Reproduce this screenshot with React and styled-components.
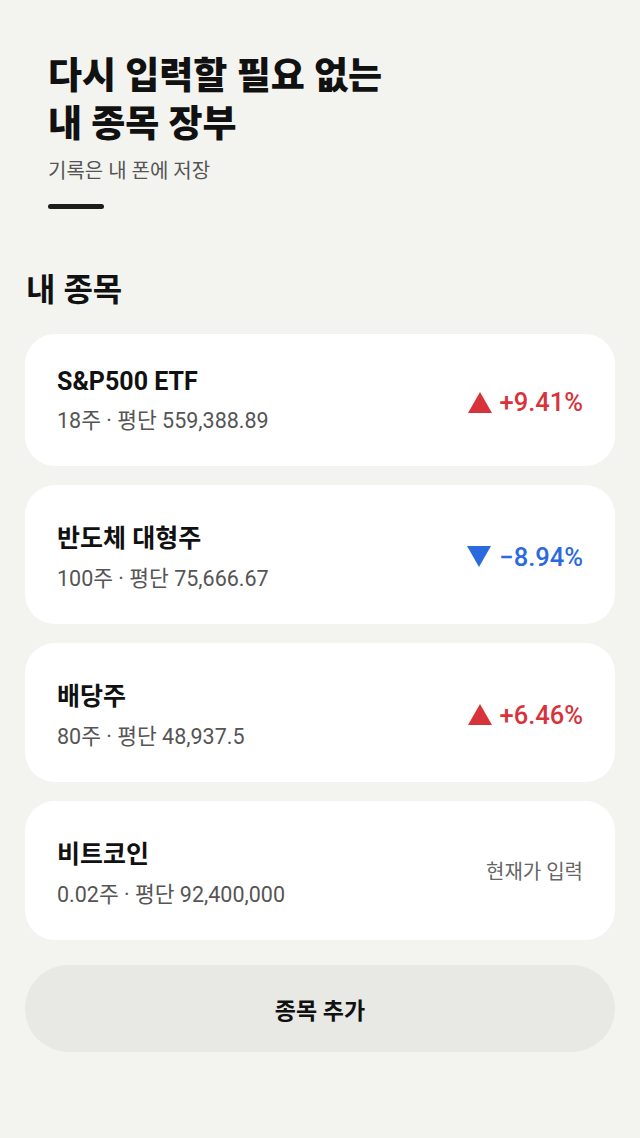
import React from 'react';
import styled, { createGlobalStyle } from 'styled-components';

const GlobalStyle = createGlobalStyle`
  html, body {
    margin: 0;
    padding: 0;
    background: #f3f4f0;
  }
  body {
    font-family: Roboto, "Noto Sans CJK KR", sans-serif;
    color: #111;
  }
`;

const Page = styled.div`
  min-height: 1138px;
  padding: 53px 25px 40px;
  box-sizing: border-box;
`;

const Header = styled.header`
  padding: 0 23px;
`;

const Title = styled.h1`
  margin: 0;
  font-size: 37px;
  line-height: 48px;
  font-weight: 800;
  color: #111;
`;

const Subtitle = styled.p`
  margin: 6px 0 0;
  font-size: 20px;
  color: #555;
`;

const Bar = styled.div`
  width: 56px;
  height: 5px;
  border-radius: 3px;
  background: #1c1c1c;
  margin-top: 20px;
`;

const SectionTitle = styled.h2`
  margin: 55px 0 0 1px;
  font-size: 32px;
  font-weight: 700;
  color: #111;
`;

const List = styled.div`
  display: flex;
  flex-direction: column;
  gap: 19px;
  margin-top: 24px;
`;

const Card = styled.div`
  display: flex;
  align-items: center;
  justify-content: space-between;
  background: #fff;
  border-radius: 30px;
  padding: 32.5px 32px;
`;

const Info = styled.div`
  display: flex;
  flex-direction: column;
  gap: 7px;
`;

const Name = styled.div`
  font-size: 25px;
  font-weight: 700;
  color: #111;
`;

const Meta = styled.div`
  font-size: 21.5px;
  color: #555;
`;

const Change = styled.div`
  display: flex;
  align-items: center;
  gap: 8px;
  margin-top: 4px;
  font-size: 25.5px;
  font-weight: 500;
  color: ${(props) => (props.up ? '#d7333b' : '#2b6ade')};
`;

const Pending = styled.div`
  font-size: 20px;
  color: #666;
`;

const AddButton = styled.button`
  margin-top: 25px;
  width: 100%;
  height: 87px;
  border: none;
  border-radius: 44px;
  background: #e8e9e5;
  font-family: Roboto, "Noto Sans CJK KR", sans-serif;
  font-size: 23px;
  font-weight: 700;
  color: #111;
`;

const Triangle = ({ up }) => (
  <svg width="24" height="21" viewBox="0 0 24 21">
    {up ? <polygon points="12,0 24,21 0,21" fill="currentColor" /> : <polygon points="0,0 24,0 12,21" fill="currentColor" />}
  </svg>
);

const stocks = [
  { name: 'S&P500 ETF', meta: '18주 · 평단 559,388.89', change: '+9.41%', up: true },
  { name: '반도체 대형주', meta: '100주 · 평단 75,666.67', change: '−8.94%', up: false },
  { name: '배당주', meta: '80주 · 평단 48,937.5', change: '+6.46%', up: true },
  { name: '비트코인', meta: '0.02주 · 평단 92,400,000' },
];

export default function App() {
  return (
    <>
      <GlobalStyle />
      <Page>
        <Header>
          <Title>
            다시 입력할 필요 없는
            <br />
            내 종목 장부
          </Title>
          <Subtitle>기록은 내 폰에 저장</Subtitle>
          <Bar />
        </Header>
        <SectionTitle>내 종목</SectionTitle>
        <List>
          {stocks.map((s) => (
            <Card key={s.name}>
              <Info>
                <Name>{s.name}</Name>
                <Meta>{s.meta}</Meta>
              </Info>
              {s.change ? (
                <Change up={s.up}>
                  <Triangle up={s.up} />
                  {s.change}
                </Change>
              ) : (
                <Pending>현재가 입력</Pending>
              )}
            </Card>
          ))}
        </List>
        <AddButton>종목 추가</AddButton>
      </Page>
    </>
  );
}
